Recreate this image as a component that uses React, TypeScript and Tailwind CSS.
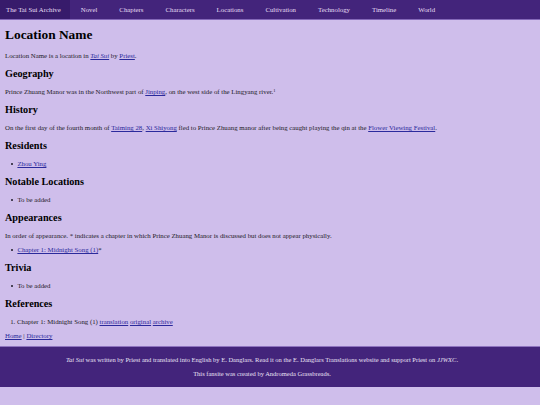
const nav = ["Novel", "Chapters", "Characters", "Locations", "Cultivation", "Technology", "Timeline", "World"];

const A = ({ children }: { children: React.ReactNode }) => (
  <a href="#" className="text-[#2b2a9c] underline">
    {children}
  </a>
);

const H2 = ({ children }: { children: React.ReactNode }) => (
  <h2 className="my-[8px] text-[10.2px] leading-[12px] font-bold text-black">{children}</h2>
);

const Li = ({ children }: { children: React.ReactNode }) => (
  <li className="flex items-center">
    <span className="mr-[4px] inline-block h-[2.4px] w-[2.4px] rounded-full bg-[#1c1a26]" />
    <span>{children}</span>
  </li>
);

export default function App() {
  return (
    <div className="min-h-[405px] bg-[#cfbeeb] font-['Liberation_Serif',serif] text-[6.8px] leading-[8px] text-[#1c1a26]">
      {/* Top nav */}
      <nav className="flex h-[20px] items-stretch border-b border-[#8468b8] bg-[#43247b] text-[#e6def4]">
        <a href="#" className="flex items-center bg-[#371b6b] pl-[6px] pr-[9px]">
          The Tai Sui Archive
        </a>
        {nav.map((n) => (
          <a key={n} href="#" className="flex items-center px-[11px]">
            {n}
          </a>
        ))}
      </nav>

      <main className="px-[5px] pt-[7px]">
        <h1 className="mb-[9px] text-[13.4px] leading-[16px] font-bold text-black">Location Name</h1>
        <p className="my-[6px]">
          Location Name is a location in <A><i>Tai Sui</i></A> by <A>Priest</A>.
        </p>

        <H2>Geography</H2>
        <p className="my-[6px]">
          Prince Zhuang Manor was in the Northwest part of <A>Jinping</A>, on the west side of the Lingyang river.
          <sup className="relative -top-[2px] align-baseline text-[4.5px]">1</sup>
        </p>

        <H2>History</H2>
        <p className="my-[6px]">
          On the first day of the fourth month of <A>Taiming 28</A>, <A>Xi Shiyong</A> fled to Prince Zhuang manor after being caught playing the qin at the <A>Flower Viewing Festival</A>.
        </p>

        <H2>Residents</H2>
        <ul className="my-[6px] pl-[6px]">
          <Li><A>Zhou Ying</A></Li>
        </ul>

        <H2>Notable Locations</H2>
        <ul className="my-[6px] pl-[6px]">
          <Li>To be added</Li>
        </ul>

        <H2>Appearances</H2>
        <p className="my-[6px]">
          In order of appearance. * indicates a chapter in which Prince Zhuang Manor is discussed but does not appear physically.
        </p>
        <ul className="my-[6px] pl-[6px]">
          <Li><A>Chapter 1: Midnight Song (1)</A>*</Li>
        </ul>

        <H2>Trivia</H2>
        <ul className="my-[6px] pl-[6px]">
          <Li>To be added</Li>
        </ul>

        <H2>References</H2>
        <ol className="my-[6px] list-decimal pl-[12px]">
          <li>
            Chapter 1: Midnight Song (1) <A>translation</A> <A>original</A> <A>archive</A>
          </li>
        </ol>
        <p className="mt-[6px] pb-[6px]">
          <A>Home</A> | <A>Directory</A>
        </p>
      </main>

      <footer className="border-t border-[#8f74c0] bg-[#43247b] pt-[9px] pr-[26px] pb-[9px] pl-[10px] text-center text-[6.5px] leading-[8px] text-[#e9e2f5]">
        <p>
          <i>Tai Sui</i> was written by Priest and translated into English by E. Danglars. Read it on the E. Danglars Translations website and support Priest on <i>JJWXC</i>.
        </p>
        <p className="mt-[6px]">This fansite was created by Andromeda Grassbreads.</p>
      </footer>
    </div>
  );
}
